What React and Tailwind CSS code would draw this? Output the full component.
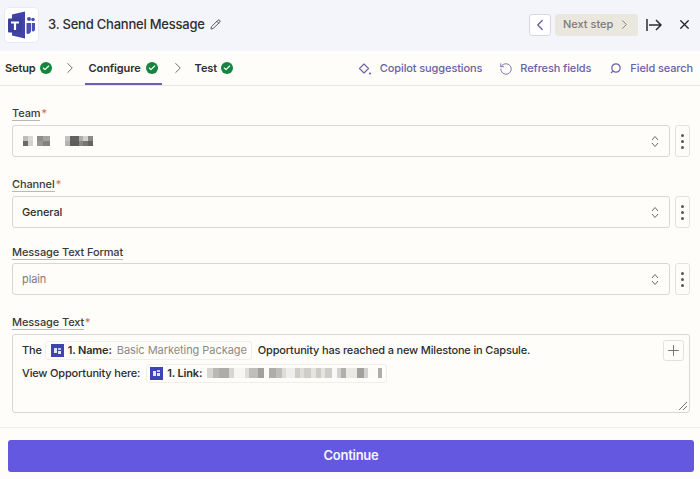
import { ChevronLeft, ChevronRight, Check, Pencil, Plus, RotateCcw, X } from "lucide-react";

const teamPixels = [
  { w: 5, top: "#bfbdb9", bottom: "#6b6967" },
  { w: 5, top: "#dad8d4", bottom: "#d3d1cd" },
  { w: 6, gap: 4, top: "#8f8d8a", bottom: "#999794" },
  { w: 7, top: "#a5a3a0", bottom: "#858380" },
  { w: 5, gap: 15, top: "#c4c2be", bottom: "#b5b3af" },
  { w: 9, top: "#646260", bottom: "#5f5d5b" },
  { w: 4, top: "#b0aeaa", bottom: "#8a8885" },
  { w: 5, top: "#d4d2ce", bottom: "#777572" },
  { w: 5, top: "#8c8a87", bottom: "#656361" },
];

const linkPixels = [
  [5, "#d8d6d2"], [6, "#bab8b4"], [10, "#aeaca8"], [4, "#d8d6d2"], [11, "#f8f6f2"], [4, "#dfddd9"],
  [8, "#c0beba"], [6, "#a2a09c"], [5, "#fdfbf7"], [6, "#afada9"], [6, "#c0beba"], [4, "#dedcd8"],
  [8, "#f0eeea"], [5, "#cfcdc9"], [4, "#e0ded9"], [6, "#d0cec9"], [5, "#e6e4df"], [5, "#cdcbc6"],
  [4, "#e6e4df"], [6, "#cfcdc9"], [5, "#fbf9f5"], [4, "#d3d1cd"], [5, "#b1afab"], [10, "#ebe9e4"],
  [7, "#a3a19d"], [3, "#d3d1cd"], [10, "#fdfbf7"], [4, "#afada9"],
];

function TeamsLogo() {
  return (
    <svg width="29" height="29" viewBox="0 0 29 29">
      <circle cx="22" cy="9" r="2" fill="#4a4fb0" />
      <circle cx="26" cy="9.500" r="1.800" fill="#4a4fb0" />
      <path d="M24.800 13H28v6.500a2 2 0 0 1-3.200 1.500z" fill="#4a4fb0" />
      <path d="M19.500 13h4.500v8a3 3 0 0 1-4.500 2.500z" fill="#4a4fb0" />
      <path d="M5 4.500 18 1.500v27L5 25.500z" fill="#3f44a6" />
      <rect x="1" y="8.500" width="14" height="14" rx="1" fill="#3a3f9e" />
      <path d="M4 11.500h8v2H9.100v6.500H6.900V13.500H4z" fill="#fff" />
    </svg>
  );
}

function MiniTeams() {
  return (
    <span className="flex h-[13px] w-[13px] shrink-0 items-center justify-center bg-[#3f44b5]">
      <span className="flex items-center gap-px">
        <span className="h-[5px] w-[3px] bg-[#e4e5f7]" />
        <span className="flex flex-col gap-px">
          <span className="h-[2px] w-[3px] bg-[#c5c8ef]" />
          <span className="h-[3px] w-[3px] bg-[#e4e5f7]" />
        </span>
      </span>
    </span>
  );
}

function CheckBadge() {
  return (
    <span className="flex h-[12px] w-[12px] items-center justify-center rounded-full bg-[#13853e]">
      <Check size={8} strokeWidth={3.5} className="text-white" />
    </span>
  );
}

function Step({ label, active }) {
  return (
    <div className={`flex h-[34px] items-center border-b-2 pt-[2px] ${active ? "gap-[5px] border-[#6a5fb5] px-[4px]" : "gap-[4px] border-transparent"}`}>
      <span className="text-[11px] font-semibold tracking-[-0.01em] text-[#2d2e2e]">{label}</span>
      <CheckBadge />
    </div>
  );
}

function ToolLink({ icon, label, tight }) {
  return (
    <div className={`flex items-center text-[11px] font-medium tracking-[-0.01em] text-[#6a60a8] ${tight ? "gap-[7px]" : "gap-[8px]"}`}>
      {icon}
      <span>{label}</span>
    </div>
  );
}

function Label({ text, required }) {
  return (
    <div className="flex h-[17px] items-start">
      <span className="border-b border-[#b9b7b3] text-[11px] leading-[13px] font-medium tracking-[-0.01em] text-[#3a3a38]">{text}</span>
      {required && <span className="ml-px text-[11px] leading-[12px] text-[#d9693f]">*</span>}
    </div>
  );
}

function SelectField({ children }) {
  return (
    <div className="flex gap-[5px]">
      <div className="flex h-[32px] flex-1 items-center justify-between rounded-[3px] border border-[#d9d7d2] pr-[10px] pl-[9px]">
        <div className="text-[11px] tracking-[-0.01em]">{children}</div>
        <svg width="8" height="13" viewBox="0 0 8 13" fill="none" stroke="currentColor" strokeWidth="1" className="text-[#6b6a68]">
          <path d="M1 5 4 1.500 7 5M1 8l3 3.500L7 8" />
        </svg>
      </div>
      <div className="flex h-[32px] w-[15px] flex-col items-center justify-center gap-[3px] rounded-[3px] border border-[#e4e2dd]">
        <span className="h-[3px] w-[3px] rounded-full bg-[#5a5957]" />
        <span className="h-[3px] w-[3px] rounded-full bg-[#5a5957]" />
        <span className="h-[3px] w-[3px] rounded-full bg-[#5a5957]" />
      </div>
    </div>
  );
}

function Chip({ name, first, children }) {
  return (
    <span className={`flex h-[19px] items-center gap-[4px] rounded-[3px] border border-[#f0eee9] pr-[4px] ${first ? "pl-[5px]" : "pl-[3px]"}`}>
      <MiniTeams />
      <span className="font-semibold text-[#2d2e2e]">{name}</span>
      {children}
    </span>
  );
}

export default function App() {
  return (
    <div className="flex h-[479px] w-[700px] flex-col overflow-hidden bg-[#fffdf9] font-['Inter',sans-serif] text-[#2d2e2e]">
      <header className="flex h-[51px] shrink-0 items-center bg-[#f4f4fb] pr-[8px] pb-[2px] pl-[4px]">
        <div className="flex h-[36px] w-[35px] items-center justify-center rounded-[5px] border border-[#ebeaf0] bg-white">
          <TeamsLogo />
        </div>
        <h1 className="ml-[9px] text-[13px] font-medium tracking-[-0.017em] text-[#2d2e2e]">3. Send Channel Message</h1>
        <Pencil size={11} strokeWidth={1.8} className="ml-[5px] text-[#3a3a38]" />
        <div className="ml-auto flex items-center">
          <button className="flex h-[22px] w-[22px] items-center justify-center rounded-[3px] border border-[#d9d8e2] bg-white">
            <ChevronLeft size={18} strokeWidth={1.6} className="text-[#5f56a5]" />
          </button>
          <div className="ml-[4px] flex h-[22px] w-[83px] items-center justify-between rounded-[3px] bg-[#e9e7de] pr-[6px] pl-[8px] text-[11px] font-medium text-[#7d7c78]">
            <span>Next step</span>
            <ChevronRight size={15} strokeWidth={1.5} className="text-[#7d7c78]" />
          </div>
          <svg width="16" height="12" viewBox="0 0 16 12" className="ml-[8px] text-[#2d2e2e]" fill="none" stroke="currentColor" strokeWidth="1.5">
            <path d="M1 0v12M3 6h12M10 1l5 5-5 5" />
          </svg>
          <X size={15} strokeWidth={2} className="ml-[15px] text-[#1f1f1f]" />
        </div>
      </header>

      <nav className="flex h-[35px] shrink-0 items-center border-b border-[#e9e7e1] pr-[7px] pl-[5px]">
        <Step label="Setup" />
        <ChevronRight size={18} strokeWidth={1.1} className="ml-[9px] text-[#55544f]" />
        <div className="ml-[6px]"><Step label="Configure" active /></div>
        <ChevronRight size={18} strokeWidth={1.1} className="ml-[7px] text-[#55544f]" />
        <div className="ml-[8px]"><Step label="Test" /></div>
        <div className="ml-auto flex items-center gap-[17px] pt-[1px]">
          <ToolLink
            label="Copilot suggestions"
            icon={
              <svg width="14" height="14" viewBox="0 0 14 14" fill="none" stroke="currentColor" strokeWidth="1.1">
                <path d="M6 2 10.500 6.500 6 11 1.500 6.500z" strokeLinejoin="round" />
                <circle cx="12" cy="11.500" r="1.100" fill="currentColor" stroke="none" />
              </svg>
            }
          />
          <ToolLink tight label="Refresh fields" icon={<RotateCcw size={14} strokeWidth={1.4} />} />
          <div className="ml-[1px]">
            <ToolLink
              label="Field search"
              icon={
                <svg width="13" height="13" viewBox="0 0 13 13" fill="none" stroke="currentColor" strokeWidth="1.2">
                  <circle cx="7" cy="6" r="4.200" />
                  <path d="M3.800 9.200 2 11" />
                </svg>
              }
            />
          </div>
        </div>
      </nav>

      <main className="flex-1 pt-[21px] pr-[10px] pl-[12px]">
        <Label text="Team" required />
        <div className="mt-[1px]">
          <SelectField>
            <div className="ml-[1px] flex h-[10px] blur-[0.5px]">
              {teamPixels.map((p, i) => (
                <span key={i} className="flex flex-col" style={{ width: p.w, marginLeft: p.gap ?? 0 }}>
                  <span className="flex-1" style={{ background: p.top }} />
                  <span className="flex-1" style={{ background: p.bottom }} />
                </span>
              ))}
            </div>
          </SelectField>
        </div>

        <div className="mt-[21px]"><Label text="Channel" required /></div>
        <div className="mt-[1px]">
          <SelectField><span className="font-medium text-[#2d2e2e]">General</span></SelectField>
        </div>

        <div className="mt-[18px]"><Label text="Message Text Format" /></div>
        <SelectField><span className="text-[#7d7c78]">plain</span></SelectField>

        <div className="mt-[21px]"><Label text="Message Text" required /></div>
        <div className="relative mt-[1px] h-[79px] rounded-[3px] border border-[#d9d7d2] pt-[6px] pl-[9px] text-[11px] font-medium tracking-[-0.015em]">
          <div className="flex h-[19px] items-center">
            <span>The</span>
            <span className="ml-[3px]">
              <Chip name="1. Name:" first>
                <span className="ml-px font-normal tracking-[-0.005em] text-[#8b8a86]">Basic Marketing Package</span>
              </Chip>
            </span>
            <span className="ml-[6px]">Opportunity has reached a new Milestone in Capsule.</span>
          </div>
          <div className="mt-[3px] flex h-[20px] items-center">
            <span>View Opportunity here:</span>
            <span className="ml-[6px]">
              <Chip name="1. Link:">
                <span className="ml-[1px] flex h-[10px] w-[175px] blur-[0.6px]">
                  {linkPixels.map(([w, c], i) => (
                    <span key={i} style={{ flexGrow: w, background: c }} />
                  ))}
                </span>
              </Chip>
            </span>
          </div>
          <div className="absolute top-[5px] right-[5px] flex h-[21px] w-[21px] items-center justify-center rounded-[3px] border border-[#e4e2dd]">
            <Plus size={17} strokeWidth={1.3} className="text-[#6b6a68]" />
          </div>
          <svg width="10" height="10" viewBox="0 0 10 10" className="absolute right-[1px] bottom-[1px] text-[#6b6a68]" fill="none" stroke="currentColor" strokeWidth="0.9">
            <path d="M1 9 9 1M5 9l4-4" />
          </svg>
        </div>
      </main>

      <footer className="h-[52px] shrink-0 border-t border-[#f1efea] pt-[12px] pr-[6px] pl-[8px]">
        <button className="flex h-[32px] w-full items-center justify-center rounded-[3px] bg-[#6457e0] text-[13px] font-semibold tracking-[-0.02em] text-[#f6f4ff]">
          Continue
        </button>
      </footer>
    </div>
  );
}
